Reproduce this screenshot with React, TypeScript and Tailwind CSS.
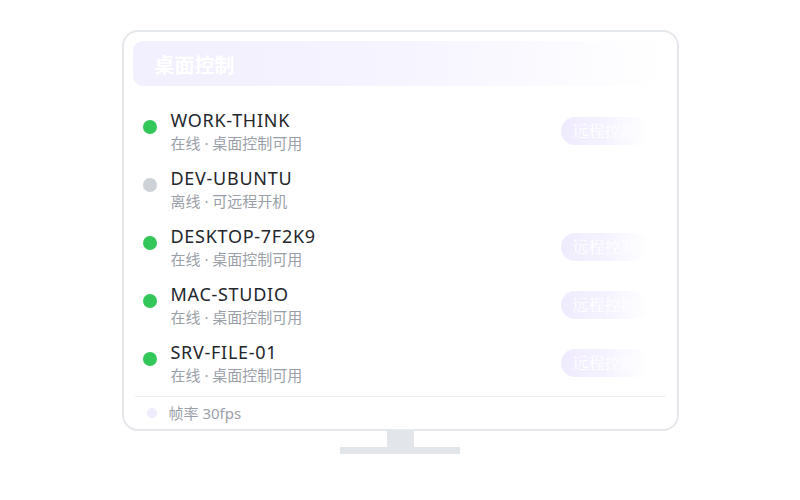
import React from "react";

type Device = { name: string; status: string; online: boolean };

const devices: Device[] = [
  { name: "WORK-THINK", status: "在线 · 桌面控制可用", online: true },
  { name: "DEV-UBUNTU", status: "离线 · 可远程开机", online: false },
  { name: "DESKTOP-7F2K9", status: "在线 · 桌面控制可用", online: true },
  { name: "MAC-STUDIO", status: "在线 · 桌面控制可用", online: true },
  { name: "SRV-FILE-01", status: "在线 · 桌面控制可用", online: true },
];

export default function App() {
  return (
    <div
      className="w-[800px] h-[500px] bg-white overflow-hidden"
      style={{ fontFamily: '"Noto Sans", "Noto Sans CJK SC", sans-serif' }}
    >
      <div className="flex flex-col items-center pt-[30px]">
        <div className="w-[557px] h-[401px] border-2 border-[#e4e7eb] rounded-[16px] bg-white flex flex-col">
          <div className="mx-[9px] mt-[9px] h-[45px] rounded-[10px] bg-gradient-to-r from-[#f2effe] via-[#f6f4ff] to-white/0 flex items-center pl-[22px] pt-[5px]">
            <span className="text-[20px] font-bold text-white leading-none">桌面控制</span>
          </div>
          <div className="mt-[16px] flex flex-col">
            {devices.map((d) => (
              <div key={d.name} className="h-[58px] flex items-center pl-[19px] pr-[28px]">
                <div className="self-start mt-[18px] w-[14px] h-[14px] rounded-full shrink-0"
                  style={{ backgroundColor: d.online ? "#33c659" : "#cdd1d8" }} />
                <div className="ml-[14px] flex flex-col">
                  <span className="text-[18px] leading-[22px] tracking-[0.04em] text-[#23262b]">{d.name}</span>
                  <span className="mt-[2px] text-[15px] leading-[20px] text-[#9aa0a8]">{d.status}</span>
                </div>
                {d.online && (
                  <div className="ml-auto h-[28px] w-[88px] rounded-full bg-gradient-to-r from-[#efebfe] via-[#f5f2ff] to-white/0 flex items-center pl-[12px]">
                    <span
                      className="text-[16px] text-white leading-none whitespace-nowrap"
                      style={{ fontFamily: '"Noto Serif CJK SC", "Liberation Serif", serif' }}
                    >
                      远程控制
                    </span>
                  </div>
                )}
              </div>
            ))}
          </div>
          <div className="mt-[4px] mx-[11px] h-px bg-[#eceef1]" />
          <div className="h-[32px] flex items-center pl-[23px]">
            <div className="w-[10px] h-[10px] rounded-full bg-[#efebfd]" />
            <span className="ml-[12px] text-[15px] text-[#9aa0a8] leading-none">帧率 30fps</span>
          </div>
        </div>
        <div className="w-[27px] h-[16px] bg-[#e2e5e9]" />
        <div className="w-[120px] h-[7px] bg-[#e2e5e9]" />
      </div>
    </div>
  );
}
